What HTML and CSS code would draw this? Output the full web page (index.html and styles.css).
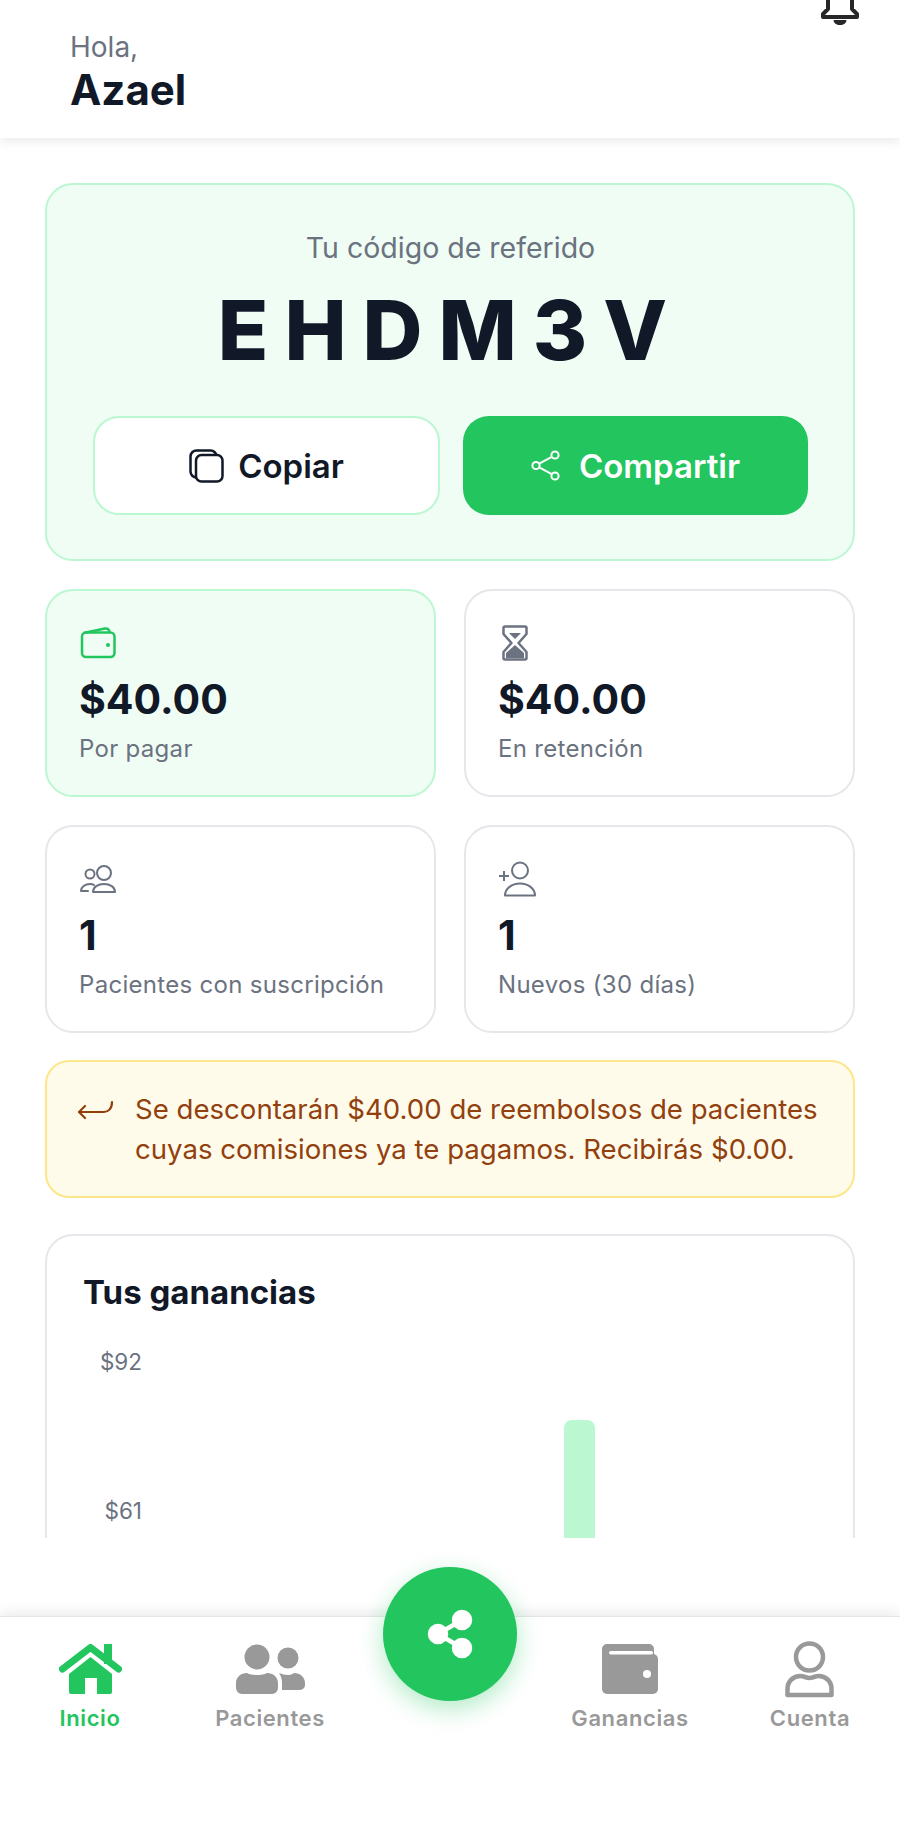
FILE: index.html
```html
<!DOCTYPE html>
<html lang="es">
<head>
    <meta charset="UTF-8">
    <meta name="viewport" content="width=device-width, initial-scale=1.0">
    <title>Inicio</title>
    <link rel="stylesheet" href="styles.css">
</head>
<body>

    <header class="top-bar">
        <div class="greeting">
            <p class="greeting-hello">Hola,</p>
            <p class="greeting-name">Azael</p>
        </div>
        <svg class="bell" viewBox="0 0 40 46" fill="none" stroke="#27272a" stroke-width="4" stroke-linejoin="round">
            <path d="M20 4c-8 0-12 6-12 14v9l-5 5v3h34v-3l-5-5v-9c0-8-4-14-12-14z"/>
            <path d="M13.500 38h13c0 3-3 5-6.500 5s-6.500-2-6.500-5z" fill="#27272a" stroke="none"/>
        </svg>
    </header>

    <main class="content">
        <section class="referral">
            <p class="referral-label">Tu código de referido</p>
            <p class="referral-code">EHDM3V</p>
            <div class="referral-actions">
                <button class="btn btn-outline">
                    <svg width="35" height="34" viewBox="0 0 35 34" fill="none" stroke="#111827" stroke-width="2.500">
                        <rect x="1.500" y="1.500" width="26" height="27" rx="6"/>
                        <rect x="7" y="6" width="26.500" height="26.500" rx="5.500" fill="#fff"/>
                    </svg>
                    Copiar
                </button>
                <button class="btn btn-green">
                    <svg width="29" height="31" viewBox="0 0 29 31" fill="none" stroke="#fff" stroke-width="2">
                        <circle cx="24" cy="5" r="3.600"/>
                        <circle cx="24" cy="26" r="3.600"/>
                        <circle cx="5" cy="15.500" r="3.600"/>
                        <path d="M8.200 13.700 20.800 6.800M8.200 17.300l12.600 6.900"/>
                    </svg>
                    Compartir
                </button>
            </div>
        </section>

        <section class="stats">
            <div class="stat stat-green">
                <svg class="stat-icon" width="37" height="36" viewBox="0 0 37 36" fill="none" stroke="#22c55e" stroke-width="2.500" stroke-linejoin="round">
                    <rect x="3" y="7.500" width="32.500" height="24.500" rx="4"/>
                    <path d="M4.500 8 26 3.500c2.500-.5 4.500 1 4.500 4"/>
                    <circle cx="29" cy="20" r="2" fill="#22c55e" stroke="none"/>
                </svg>
                <p class="stat-value">$40.00</p>
                <p class="stat-label">Por pagar</p>
            </div>
            <div class="stat">
                <svg class="stat-icon" width="35" height="36" viewBox="0 0 35 36" fill="none" stroke="#6b7280" stroke-width="2.500" stroke-linejoin="round">
                    <path d="M7 1.500h20a1.500 1.500 0 0 1 1.500 1.500v6l-8 9 8 9v6a1.500 1.500 0 0 1-1.500 1.500H7A1.500 1.500 0 0 1 5.500 33v-6l8-9-8-9V3A1.500 1.500 0 0 1 7 1.500z"/>
                    <path d="M8 33v-5l9-8 9 8v5zM11 8h12l-6 6z" fill="#6b7280" stroke="none"/>
                </svg>
                <p class="stat-value">$40.00</p>
                <p class="stat-label">En retención</p>
            </div>
            <div class="stat">
                <svg class="stat-icon" width="38" height="36" viewBox="0 0 38 36" fill="none" stroke="#6b7280" stroke-width="2">
                    <circle cx="11" cy="13" r="4.500"/>
                    <circle cx="25" cy="12" r="7"/>
                    <path d="M14 31c0-5 5-8 11-8s11 3 11 8z" stroke-linejoin="round"/>
                    <path d="M2 30c0-4 4-7 9-7 1.500 0 3 .3 4 1M2 30h7" stroke-linecap="round"/>
                </svg>
                <p class="stat-value">1</p>
                <p class="stat-label">Pacientes con suscripción</p>
            </div>
            <div class="stat">
                <svg class="stat-icon" width="40" height="36" viewBox="0 0 40 36" fill="none" stroke="#6b7280" stroke-width="2">
                    <circle cx="22" cy="9.500" r="8"/>
                    <path d="M7 34.500c0-7 7-12 15-12s15 5 15 12z" stroke-linejoin="round"/>
                    <path d="M1 15h10M6 10v10"/>
                </svg>
                <p class="stat-value">1</p>
                <p class="stat-label">Nuevos (30 días)</p>
            </div>
        </section>

        <section class="notice">
            <svg class="notice-icon" width="37" height="20" viewBox="0 0 37 20" fill="none" stroke="#92400e" stroke-width="2.200" stroke-linecap="round" stroke-linejoin="round">
                <path d="M2 12h25c4 0 8-3 8-10"/>
                <path d="M8 6l-6 6 6 6"/>
            </svg>
            <p>Se descontarán $40.00 de reembolsos de pacientes cuyas comisiones ya te pagamos. Recibirás $0.00.</p>
        </section>

        <section class="chart-card">
            <h2>Tus ganancias</h2>
            <div class="chart">
                <div class="chart-axis">
                    <span>$92</span>
                    <span>$61</span>
                </div>
                <div class="chart-plot">
                    <div class="bar" style="height: 0"></div>
                    <div class="bar" style="height: 0"></div>
                    <div class="bar" style="height: 0"></div>
                    <div class="bar" style="height: 0"></div>
                    <div class="bar" style="height: 429px"></div>
                    <div class="bar" style="height: 0"></div>
                    <div class="bar" style="height: 0"></div>
                </div>
            </div>
        </section>
    </main>

    <nav class="bottom-nav">
        <a class="nav-item active">
            <svg width="63" height="56" viewBox="0 0 63 56">
                <path d="M45 0h8v20h-8z" fill="#22c55e"/>
                <path d="M3.500 25 31.500 3.500l28 21.500" fill="none" stroke="#22c55e" stroke-width="7" stroke-linecap="round" stroke-linejoin="round"/>
                <path d="M31.500 13 53 30v18a2 2 0 0 1-2 2H38V34H26v16H12a2 2 0 0 1-2-2V30z" fill="#22c55e"/>
            </svg>
            Inicio
        </a>
        <a class="nav-item">
            <svg width="69" height="56" viewBox="0 0 69 56" fill="#999">
                <circle cx="21" cy="13" r="12.500"/>
                <circle cx="52" cy="14" r="10.500"/>
                <path d="M11 29c3 1.500 6 2 10 2s7-.5 10-2c6 0 11 4 11 10v5a6 6 0 0 1-6 6H6a6 6 0 0 1-6-6v-5c0-6 5-10 11-10z"/>
                <path d="M43 29c3 1 6 2 9 2 2 0 4-.5 6-2 6 0 11 4 11 10v2a5 5 0 0 1-5 5H46v-7c0-4-1-7-3-10z"/>
            </svg>
            Pacientes
        </a>
        <a class="nav-item nav-spacer"></a>
        <a class="nav-item">
            <svg width="56" height="56" viewBox="0 0 56 56" fill="#999">
                <rect width="52" height="20" rx="5"/>
                <rect y="10" width="56" height="40" rx="5"/>
                <rect x="7" y="7" width="44" height="3.500" rx="1.700" fill="#fff"/>
                <circle cx="45" cy="30" r="4" fill="#fff"/>
            </svg>
            Ganancias
        </a>
        <a class="nav-item">
            <svg class="nav-account" width="50" height="57" viewBox="0 0 50 57" fill="none" stroke="#999" stroke-width="4.500" stroke-linejoin="round">
                <circle cx="24.500" cy="16" r="13.500"/>
                <path d="M2.500 54v-6c0-8 6-13 13-13 3 0 6 2 9 2s6-2 9-2c7 0 13 5 13 13v6z"/>
            </svg>
            Cuenta
        </a>
    </nav>

    <button class="fab">
        <svg width="60" height="60" viewBox="0 0 60 60" fill="#fff" stroke="#fff" stroke-width="4.500">
            <circle cx="18" cy="30" r="8" />
            <circle cx="42" cy="16" r="8" />
            <circle cx="42" cy="44" r="8" />
            <path d="M18 30 42 16M18 30l24 14" fill="none"/>
        </svg>
    </button>

</body>
</html>
```

FILE: styles.css
```css
* {
    box-sizing: border-box;
}

body {
    display: flex;
    flex-direction: column;
    height: 1825px;
    margin: 0;
    overflow: hidden;
    position: relative;
    background: #fff;
    font-family: 'Inter', 'Liberation Sans', sans-serif;
    color: #111827;
}

p {
    margin: 0;
}

.top-bar {
    flex: none;
    display: flex;
    justify-content: space-between;
    align-items: flex-start;
    height: 138px;
    padding: 0 40px 0 70px;
    background: #fff;
    box-shadow: 0 4px 10px rgba(0, 0, 0, 0.08);
    position: relative;
    z-index: 1;
}

.greeting {
    padding-top: 30px;
}

.greeting-hello {
    font-size: 28px;
    line-height: 34px;
    color: #6b7280;
}

.greeting-name {
    font-size: 42px;
    font-weight: 700;
    line-height: 52px;
}

.bell {
    width: 40px;
    height: 46px;
    margin-top: -18px;
}

.content {
    flex: 1;
    min-height: 0;
    overflow: hidden;
    padding: 45px 45px 0;
}

.referral {
    height: 378px;
    padding: 46px 45px 0 46px;
    background: #f0fdf4;
    border: 2px solid #bbf7d0;
    border-radius: 28px;
    text-align: center;
}

.referral-label {
    font-size: 28.500px;
    line-height: 34px;
    color: #6b7280;
}

.referral-code {
    margin: 15px 0 36px;
    font-size: 83px;
    font-weight: 800;
    line-height: 100px;
    letter-spacing: 16px;
}

.referral-actions {
    display: flex;
    gap: 23px;
}

.btn {
    display: flex;
    justify-content: center;
    align-items: center;
    height: 99px;
    border-radius: 26px;
    font-family: inherit;
    font-size: 33px;
    font-weight: 600;
}

.btn-outline {
    flex: 0 0 347px;
    gap: 14px;
    background: #fff;
    border: 2px solid #bbf7d0;
    color: #111827;
}

.btn-green {
    flex: 1;
    gap: 19px;
    background: #22c55e;
    border: none;
    color: #fff;
}

.stats {
    display: grid;
    grid-template-columns: 1fr 1fr;
    gap: 28px;
    margin-top: 28px;
}

.stat {
    height: 208px;
    padding: 34px 32px 0;
    background: #fff;
    border: 2px solid #e5e7eb;
    border-radius: 28px;
}

.stat-green {
    background: #f0fdf4;
    border-color: #bbf7d0;
}

.stat-icon {
    display: block;
}

.stat-value {
    margin-top: 13px;
    font-size: 41px;
    font-weight: 700;
    line-height: 50px;
}

.stat-label {
    margin-top: 10px;
    font-size: 24px;
    line-height: 30px;
    letter-spacing: 0.3px;
    color: #6b7280;
}

.notice {
    display: flex;
    gap: 21px;
    height: 138px;
    margin-top: 27px;
    padding: 27px 30px 0;
    background: #fffbeb;
    border: 2px solid #fde68a;
    border-radius: 24px;
    font-size: 27.600px;
    line-height: 40px;
    color: #92400e;
}

.notice-icon {
    flex: none;
    margin-top: 11px;
}

.chart-card {
    margin-top: 36px;
    padding: 36px 36px 0;
    background: #fff;
    border: 2px solid #e5e7eb;
    border-radius: 28px;
}

.chart-card h2 {
    margin: 0 0 37px;
    font-size: 33px;
    font-weight: 700;
    line-height: 40px;
}

.chart {
    display: flex;
    gap: 14px;
}

.chart-axis {
    display: flex;
    flex-direction: column;
    align-items: flex-end;
    gap: 123px;
    width: 59px;
    font-size: 22.500px;
    line-height: 26px;
    color: #6b7280;
}

.chart-plot {
    flex: 1;
    display: grid;
    grid-template-columns: repeat(7, 1fr);
    justify-items: center;
    align-items: end;
    height: 500px;
    padding-right: 3px;
}

.bar {
    width: 31px;
    background: #bbf7d0;
    border-radius: 8px 8px 0 0;
}

.bottom-nav {
    flex: none;
    display: grid;
    grid-template-columns: repeat(5, 1fr);
    height: 209px;
    margin-top: 78px;
    padding-top: 27px;
    background: #fff;
    border-top: 1px solid #e5e5e5;
    box-shadow: 0 -4px 12px rgba(0, 0, 0, 0.08);
}

.nav-item {
    display: flex;
    flex-direction: column;
    align-items: center;
    height: 92px;
    font-size: 22px;
    font-weight: 600;
    line-height: 28px;
    letter-spacing: 0.6px;
    color: #999;
}

.nav-item svg {
    display: block;
    margin-bottom: 4px;
}

.nav-item .nav-account {
    margin-top: -3px;
    margin-bottom: 6px;
}

.nav-item.active {
    color: #22c55e;
}

.fab {
    position: absolute;
    left: 383px;
    top: 1567px;
    display: flex;
    justify-content: center;
    align-items: center;
    width: 134px;
    height: 134px;
    padding: 0;
    background: #22c55e;
    border: none;
    border-radius: 50%;
    box-shadow: 0 8px 24px rgba(34, 197, 94, 0.35);
}
```
